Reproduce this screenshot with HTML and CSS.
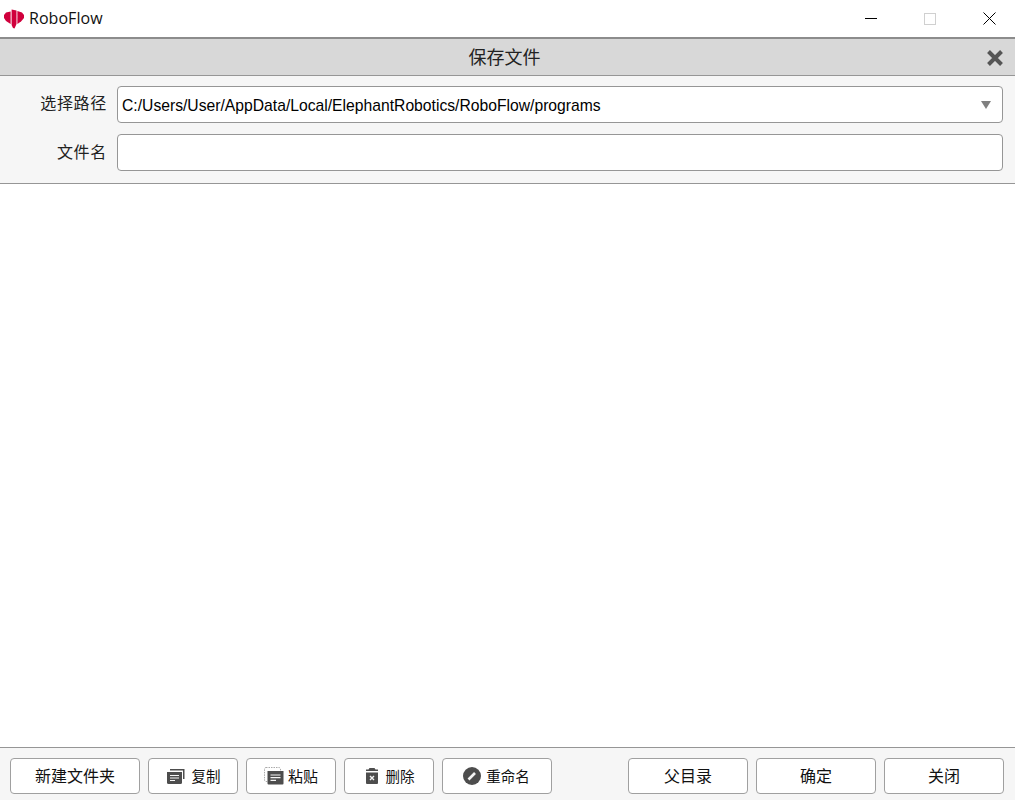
FILE: index.html
```html
<!DOCTYPE html>
<html lang="zh">
<head>
<meta charset="utf-8">
<title>RoboFlow</title>
<link rel="stylesheet" href="styles.css">
</head>
<body>
<div class="window">
  <div class="titlebar">
    <div class="brand">
      <svg class="logo" width="20" height="20" viewBox="0 0 20 20"><path fill="#d0003c" d="M0 6L2 3.5L6.6 2.4V15L2 12L0 9Z"/><path fill="#d0003c" d="M7.6 0.4L12.5 1.5V15L10.5 19.6L9 19L7.6 16Z"/><path fill="#d0003c" d="M13.4 2L18 3.5L20 6V9L17 12.5L13.4 15Z"/></svg>
      <span class="app-name">RoboFlow</span>
    </div>
    <div class="win-controls">
      <span class="win-btn"><svg width="12" height="12" viewBox="0 0 12 12"><path d="M0 5.5H12" stroke="#000" fill="none"/></svg></span>
      <span class="win-btn"><svg width="12" height="12" viewBox="0 0 12 12"><rect x="0.5" y="0.5" width="11" height="11" stroke="#d0d0d0" fill="none"/></svg></span>
      <span class="win-btn"><svg width="13" height="13" viewBox="0 0 13 13"><path d="M0.5 0.5L12.5 12.5M12.5 0.5L0.5 12.5" stroke="#000" fill="none"/></svg></span>
    </div>
  </div>
  <div class="dialog-head">
    <span class="dialog-title">保存文件</span>
    <svg class="dialog-close" width="16" height="16" viewBox="0 0 16 16"><path d="M1.5 1.5L14.5 14.5M14.5 1.5L1.5 14.5" stroke="#555" stroke-width="4" fill="none"/></svg>
  </div>
  <div class="form">
    <div class="form-row">
      <label class="form-label form-label-first">选择路径</label>
      <div class="field select">
        <span class="field-text">C:/Users/User/AppData/Local/ElephantRobotics/RoboFlow/programs</span>
        <svg class="caret" width="10" height="8" viewBox="0 0 10 8"><path d="M0 0H10L5 8Z" fill="#808080"/></svg>
      </div>
    </div>
    <div class="form-row">
      <label class="form-label">文件名</label>
      <div class="field"></div>
    </div>
  </div>
  <div class="content"></div>
  <div class="footer">
    <div class="btn-group">
      <button class="btn btn-new"><span class="btn-label">新建文件夹</span></button>
      <button class="btn btn-sm btn-copy">
        <svg width="18" height="15" viewBox="0 0 18 15"><path fill="#4d4d4d" d="M3 0H17.5V10H16V1.5H3Z"/><path fill="#4d4d4d" d="M0 3H15V13.5Q15 15 13.5 15H1.5Q0 15 0 13.5Z"/><path stroke="#f5f5f5" stroke-width="1.2" d="M3 6.5H12M3 9H12M3 11.5H8"/></svg>
        <span class="small-text">复制</span>
      </button>
      <button class="btn btn-sm btn-paste">
        <svg width="20" height="18" viewBox="0 0 20 18"><rect x="0.5" y="0.5" width="16" height="14" rx="1.5" fill="none" stroke="#aaa" stroke-dasharray="1.5 1"/><path fill="#4d4d4d" d="M3.5 4H19.5V16.5Q19.5 17.5 18.5 17.5H4.5Q3.5 17.5 3.5 16.5Z"/><path stroke="#f5f5f5" stroke-width="1.2" d="M6.5 8H16.5M6.5 10.7H16.5M6.5 13.4H12"/></svg>
        <span class="paste-text">粘贴</span>
      </button>
      <button class="btn btn-sm btn-del">
        <svg width="14" height="16" viewBox="0 0 14 16"><path fill="#4d4d4d" d="M4.5 0H9.5L10.5 1.5H13V3H1V1.5H3.5Z"/><path fill="#4d4d4d" d="M1 4.5H13V15Q13 16 12 16H2Q1 16 1 15Z"/><path stroke="#f5f5f5" stroke-width="1.4" d="M5 8L9 12M9 8L5 12"/></svg>
        <span class="small-text">删除</span>
      </button>
      <button class="btn btn-ren">
        <svg width="18" height="18" viewBox="0 0 18 18"><circle cx="9" cy="9" r="9" fill="#4d4d4d"/><path stroke="#f5f5f5" stroke-width="2.6" d="M5.5 12.5L12 6"/></svg>
        <span class="small-text">重命名</span>
      </button>
    </div>
    <div class="btn-group">
      <button class="btn btn-wide"><span class="btn-label">父目录</span></button>
      <button class="btn btn-wide"><span class="btn-label">确定</span></button>
      <button class="btn btn-wide"><span class="btn-label">关闭</span></button>
    </div>
  </div>
</div>
</body>
</html>
```
FILE: styles.css
```css
* { box-sizing: border-box; }
html, body { margin: 0; padding: 0; }
body {
  width: 1015px;
  height: 800px;
  overflow: hidden;
  background: #fff;
  font-family: "Liberation Sans", "Noto Sans CJK SC", sans-serif;
  color: #000;
}
.window { display: flex; flex-direction: column; height: 800px; }

.titlebar {
  height: 37px;
  display: flex;
  align-items: center;
  justify-content: space-between;
  background: #fff;
}
.brand { display: flex; align-items: center; padding-left: 4px; gap: 5px; }
.logo { display: block; }
.app-name { font-family: "Open Sans", sans-serif; font-size: 16px; color: #111; margin-top: -1px; letter-spacing: 0.05px; }
.win-controls { display: flex; gap: 13px; padding-right: 3px; }
.win-btn { width: 46px; height: 36px; display: flex; align-items: center; justify-content: center; }

.dialog-head {
  height: 39px;
  background: #d8d8d8;
  border-top: 2px solid #8c8c8c;
  border-bottom: 1px solid #969696;
  padding: 0 6px 2px 0;
  display: flex;
  align-items: center;
  justify-content: center;
  position: relative;
}
.dialog-title { font-size: 18px; color: #222; }
.dialog-close { position: absolute; right: 12px; top: 11px; }

.form {
  height: 108px;
  background: #f6f6f6;
  border-bottom: 1px solid #969696;
  padding: 10px 12px 0 0;
  display: flex;
  flex-direction: column;
  gap: 11px;
}
.form-row { display: flex; align-items: center; height: 37px; }
.form-label { width: 107px; padding-bottom: 3px; text-align: right; font-size: 16px; color: #222; letter-spacing: 0.7px; }
.form-label-first { padding-bottom: 5px; }
.field {
  margin-left: 10px;
  flex: 1;
  height: 37px;
  background: #fff;
  border: 1px solid #969696;
  border-radius: 4px;
  display: flex;
  align-items: center;
  justify-content: space-between;
  padding: 2px 11px 0 4px;
}
.field-text { font-size: 15.7px; color: #000; }
.caret { display: block; margin-top: -2px; }

.content { flex: 1; background: #fff; }

.footer {
  height: 53px;
  background: #f6f6f6;
  border-top: 1px solid #969696;
  padding: 10px 11px 6px 10px;
  display: flex;
  justify-content: space-between;
}
.btn-group { display: flex; gap: 8px; }
.btn {
  height: 36px;
  background: #fff;
  border: 1px solid #a0a0a0;
  border-radius: 4px;
  font-family: inherit;
  font-size: 16px;
  color: #111;
  padding: 0;
  display: flex;
  align-items: center;
  justify-content: center;
}
.btn-label { margin-top: -2px; }
.btn-new { width: 130px; }
.btn-sm { width: 90px; gap: 7px; }
.btn-ren { width: 110px; gap: 5px; padding-right: 1px; }
.btn-wide { width: 120px; }
.btn-copy { padding-left: 1px; }
.btn-paste { gap: 4px; }
.btn-del { gap: 7px; padding-left: 1px; }
.small-text { font-size: 14.5px; margin-top: -1px; }
.paste-text { font-size: 15px; margin-top: -1px; }
```
